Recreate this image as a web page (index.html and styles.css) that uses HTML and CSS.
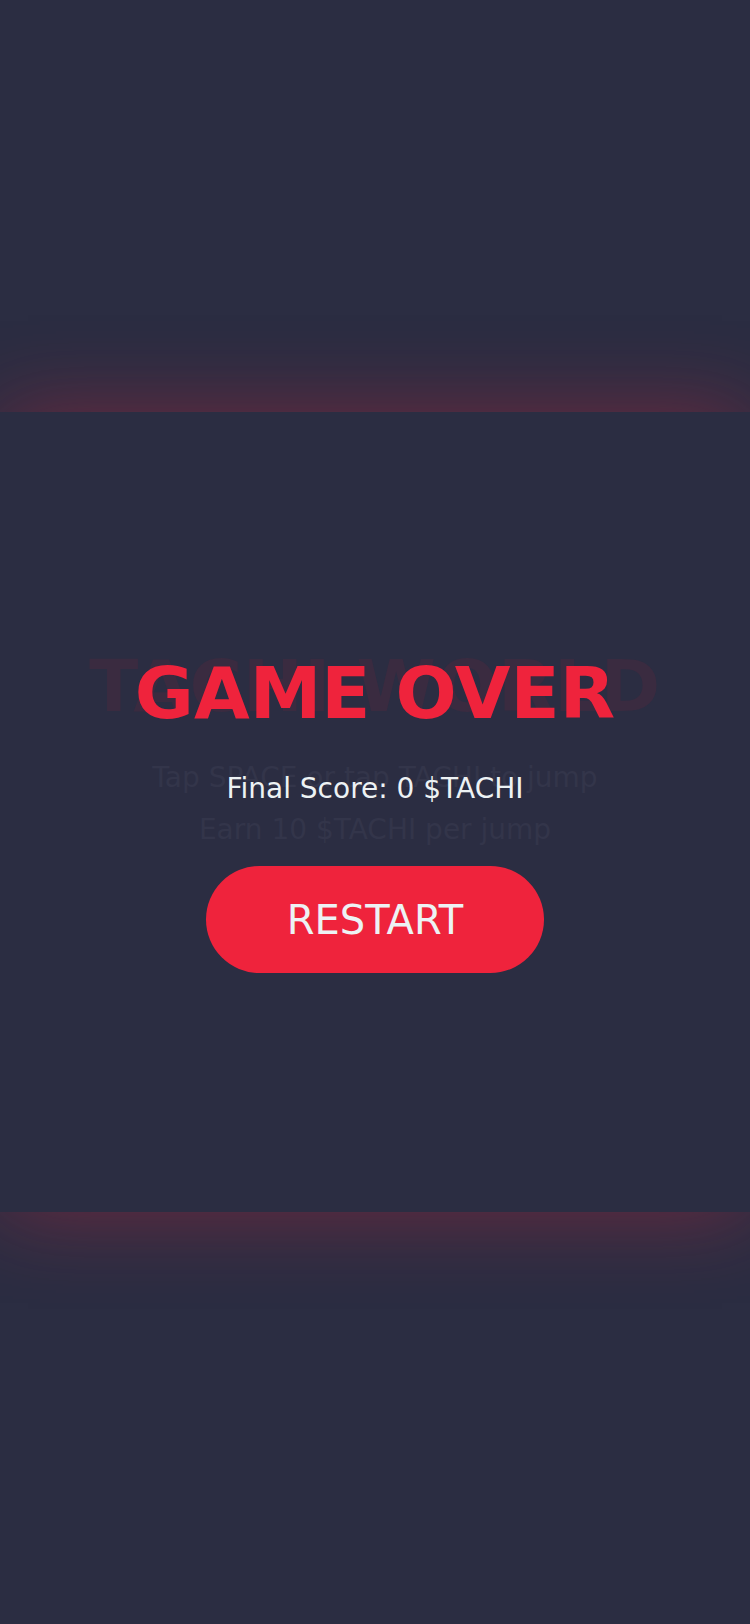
FILE: index.html
```html
<!DOCTYPE html>
<html lang="en">
<head>
<meta charset="utf-8">
<title>TACHI WORLD</title>
<link rel="stylesheet" href="styles.css">
</head>
<body>
<div class="screen">
  <div class="pipe-zone"></div>
  <main class="stage">
    <section class="layer start-screen">
      <h1 class="start-title">TACHI WORLD</h1>
      <p class="start-hint">Tap SPACE or tap TACHI to jump</p>
      <p class="start-hint second">Earn 10 $TACHI per jump</p>
    </section>
    <section class="layer over-screen">
      <h2 class="over-title">GAME OVER</h2>
      <p class="final-score">Final Score: 0 $TACHI</p>
      <button class="restart-btn" type="button">RESTART</button>
    </section>
  </main>
  <div class="pipe-zone"></div>
</div>
</body>
</html>
```

FILE: styles.css
```css
* {
  box-sizing: border-box;
}

html, body {
  margin: 0;
  padding: 0;
  background: #2b2d42;
}

body {
  width: 750px;
  height: 1624px;
  overflow: hidden;
  font-family: "DejaVu Sans", "Liberation Sans", sans-serif;
}

.screen {
  display: flex;
  flex-direction: column;
  width: 750px;
  height: 1624px;
}

.pipe-zone {
  height: 412px;
  flex: none;
}

.stage {
  height: 800px;
  flex: none;
  background: #2b2d42;
  box-shadow: 0 0 80px rgba(239, 35, 60, 0.34);
  display: grid;
  grid-template-columns: 1fr;
  grid-template-rows: 1fr;
}

.layer {
  grid-area: 1 / 1;
  display: flex;
  flex-direction: column;
  align-items: center;
}

.start-screen {
  padding-top: 232px;
}

.start-title {
  margin: 0;
  font-size: 72px;
  line-height: 84px;
  font-weight: 700;
  letter-spacing: 0.5px;
  color: #3a2b40;
  white-space: nowrap;
}

.start-hint {
  margin: 33px 0 0;
  font-size: 28px;
  line-height: 33px;
  color: #33354a;
  white-space: nowrap;
}

.start-hint.second {
  margin-top: 19px;
}

.over-screen {
  padding-top: 239px;
}

.over-title {
  margin: 0;
  font-size: 72px;
  line-height: 84px;
  font-weight: 700;
  color: #ef233c;
  white-space: nowrap;
}

.final-score {
  margin: 37px 0 0;
  font-size: 28px;
  line-height: 33px;
  color: #edf2f4;
  white-space: nowrap;
}

.restart-btn {
  margin-top: 61px;
  padding: 31px 81px 29px;
  border: none;
  border-radius: 60px;
  background: #ef233c;
  color: #edf2f4;
  font-family: "DejaVu Sans", "Liberation Sans", sans-serif;
  font-size: 40px;
  line-height: 47px;
  cursor: pointer;
}
```
